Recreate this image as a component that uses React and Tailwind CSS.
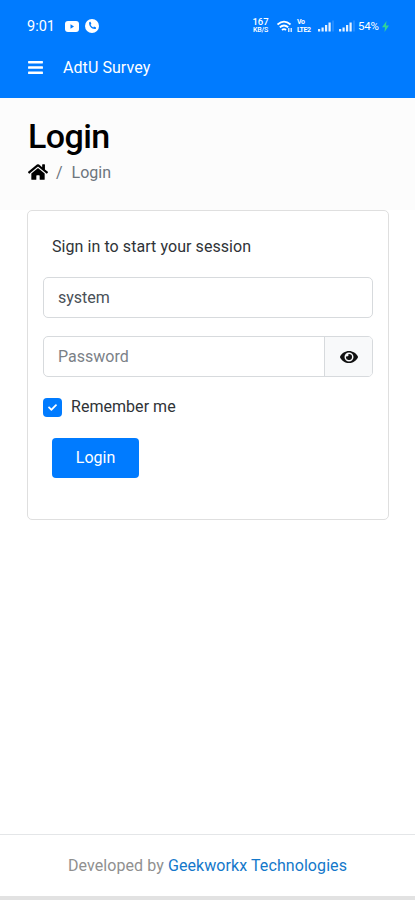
import React from 'react';
import { FaBars, FaCheck, FaEye, FaHome } from 'react-icons/fa';

const SignalIcon = () => (
  <svg width="17" height="12" viewBox="0 0 17 12" fill="white" fillOpacity="0.9">
    <rect x="0" y="9" width="2.200" height="2.500"></rect>
    <rect x="3.500" y="7.500" width="2.200" height="4"></rect>
    <rect x="7" y="5" width="2.200" height="6.500"></rect>
    <rect x="10.500" y="2.500" width="2.200" height="9"></rect>
    <rect x="14.500" y="0.500" width="1" height="11" opacity="0.3"></rect>
  </svg>
);

const StatusBar = () => (
  <div className="flex h-[52px] items-center pl-[27px] pr-[26px] text-white">
    <span className="w-[38px] text-[14.5px] leading-[17px]">9:01</span>
    <svg width="14" height="11" viewBox="0 0 14 11">
      <rect width="14" height="11" rx="3" fill="white"></rect>
      <path d="M5.500 3.300v4.400L9 5.500Z" fill="#007bff"></path>
    </svg>
    <svg className="ml-[6px]" width="14" height="14" viewBox="0 0 14 14">
      <circle cx="7" cy="7" r="7" fill="white"></circle>
      <path d="M4.300 3.100 5.500 2.800 6.400 5 5.500 5.800C6 7 6.900 7.900 8.200 8.500L9 7.600 11.100 8.600 10.800 10C7 10.800 3.200 7 4.300 3.100Z" fill="#007bff"></path>
    </svg>
    <div className="ml-auto flex items-center">
      <div className="w-[17px] text-center font-medium">
        <div className="text-[9.5px] leading-[8px]">167</div>
        <div className="text-[7px] leading-[8px] tracking-[-0.2px]">KB/S</div>
      </div>
      <svg className="ml-[8px]" width="16" height="13" viewBox="0 0 16 13" fill="none" stroke="white" strokeWidth="1.800">
        <path d="M0.500 4.500Q7-1.200 13.500 4.500"></path>
        <path d="M2.800 7.300Q7 3.700 11.200 7.300"></path>
        <path d="M5 10Q7 8.200 9 10"></path>
        <path d="M11.800 8v4M14.200 8v4" strokeWidth="1.200"></path>
      </svg>
      <div className="ml-[4px] w-[15px] text-[7px] font-bold leading-[8px] tracking-[-0.4px]">
        <div>Vo</div>
        <div>LTE2</div>
      </div>
      <span className="ml-[6px]"><SignalIcon /></span>
      <span className="ml-[4px]"><SignalIcon /></span>
      <span className="ml-[2px] w-[23px] text-[11.5px] leading-[14px] tracking-[-0.2px]">54%</span>
      <svg className="ml-[1px]" width="7" height="11" viewBox="0 0 7 11" fill="#2fd39a">
        <path d="M4.500 0 0 6.200h3L2.500 11 7 4.500H4Z"></path>
      </svg>
    </div>
  </div>
);

const App = () => {
  return (
    <div className="flex h-[900px] w-full flex-col bg-white font-['Roboto',sans-serif] text-[16px] text-[#2f3337]">
      <header className="h-[98px] bg-[#007bff]">
        <StatusBar />
        <div className="flex h-[31px] items-center pl-[28px] text-white">
          <FaBars className="h-[17px] w-[15px]" />
          <span className="ml-[20px] tracking-[0.07px]">AdtU Survey</span>
        </div>
      </header>

      {/* Page heading */}
      <div className="h-[112px] bg-[#fcfcfc] pl-[28px] pt-[18px]">
        <h1 className="text-[34px] font-medium leading-[40px] tracking-[-0.6px] text-black">Login</h1>
        <div className="mt-[4px] flex h-[24px] items-center text-[#6c757d]">
          <FaHome className="h-[20px] w-[20px] text-black" />
          <span className="ml-[8px] translate-y-[1px]">/</span>
          <span className="ml-[9px] translate-y-[1px]">Login</span>
        </div>
      </div>

      {/* Sign in card */}
      <main className="flex-1 px-[27px]">
        <div className="h-[310px] w-[362px] rounded-[5px] border border-[#dfdfdf] px-[15px] pt-[24px]">
          <p className="ml-[9px] h-[24px] leading-[24px] tracking-[0.07px]">Sign in to start your session</p>
          <div className="mt-[18px] flex h-[41px] w-[330px] items-center rounded-[5px] border border-[#d7dadd] pl-[14px] text-[#495057]">
            system
          </div>
          <div className="mt-[18px] flex h-[41px] w-[330px] overflow-hidden rounded-[5px] border border-[#d7dadd]">
            <div className="flex flex-1 items-center pl-[14px] text-[#7b8187]">Password</div>
            <div className="flex w-[48px] items-center justify-center border-l border-[#d7dadd] bg-[#f8f9fa]">
              <FaEye className="h-[18px] w-[18px] text-[#111]" />
            </div>
          </div>
          <label className="mt-[18px] flex h-[24px] items-center">
            <span className="flex h-[19px] w-[19px] items-center justify-center rounded-[4px] bg-[#007bff]">
              <FaCheck className="h-[9px] w-[9px] text-white" />
            </span>
            <span className="ml-[9px] tracking-[0.04px]">Remember me</span>
          </label>
          <button className="ml-[9px] mt-[19px] h-[40px] w-[87px] rounded-[4px] bg-[#007bff] text-white">Login</button>
        </div>
      </main>

      <footer className="flex h-[66px] items-center justify-center border-b-[4px] border-t border-b-[#e2e2e2] border-t-[#e4e6e8] text-[#909090]">
        <span className="tracking-[0.08px]">Developed by <span className="text-[#1478ca]">Geekworkx Technologies</span></span>
      </footer>
    </div>
  );
};

export default App;
